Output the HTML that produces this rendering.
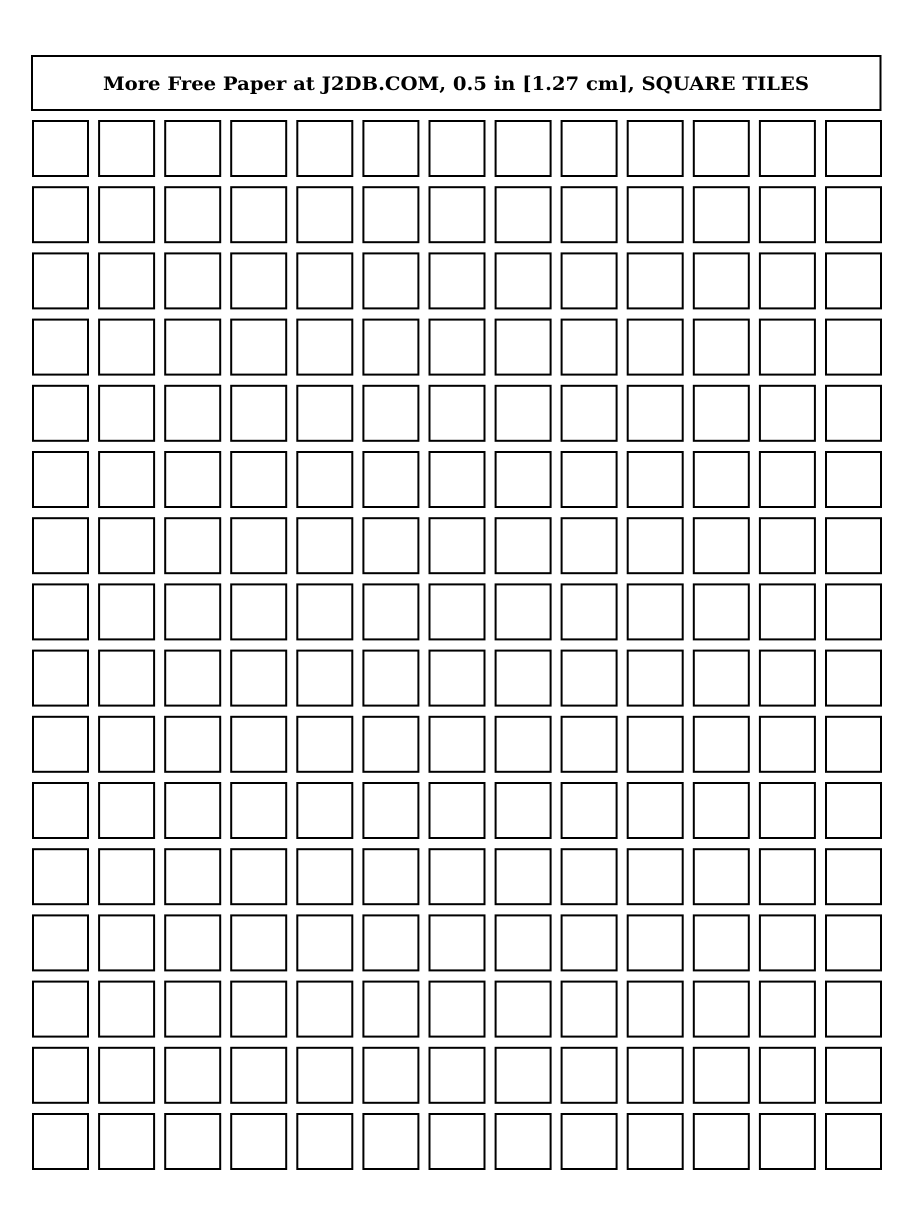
<!DOCTYPE html>
<html><head><style>
html,body{margin:0;padding:0;background:#fff;width:910px;height:1213px;overflow:hidden}
svg{position:absolute;left:0;top:0}
</style></head><body>
<svg width="910" height="1213" xmlns="http://www.w3.org/2000/svg">
<rect x="32" y="56" width="848.5" height="54" fill="none" stroke="#000" stroke-width="2"/>
<text x="103" y="90" textLength="706" lengthAdjust="spacingAndGlyphs" font-family="'DejaVu Serif','Liberation Serif',serif" font-weight="bold" font-size="19">More Free Paper at J2DB.COM, 0.5 in [1.27 cm], SQUARE TILES</text>
<g id="g" fill="none" stroke="#000" stroke-width="2"></g>
</svg>
<script>
var g=document.getElementById('g'),s='';
for(var r=0;r<16;r++)for(var c=0;c<13;c++){
var x=33+c*66.08,y=121+r*66.2;
s+='<rect x="'+x.toFixed(1)+'" y="'+y.toFixed(1)+'" width="55" height="55"/>';}
g.innerHTML=s;
</script>
</body></html>
